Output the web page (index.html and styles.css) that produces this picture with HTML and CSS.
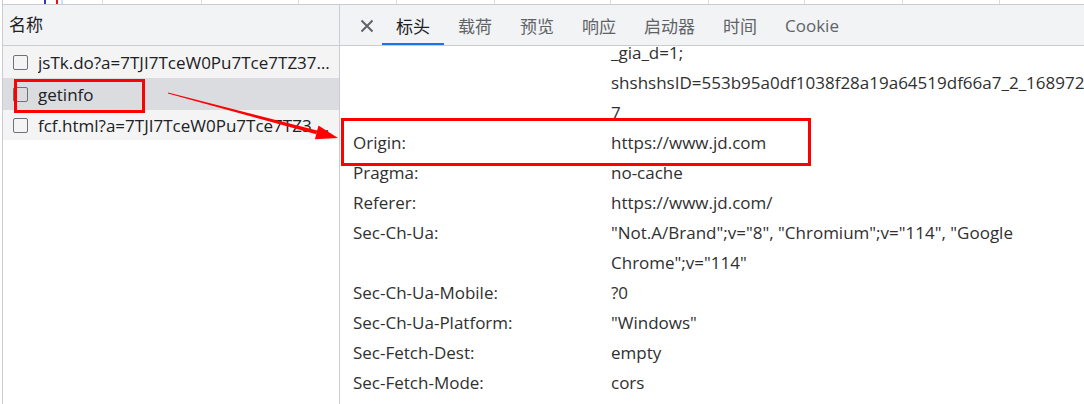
FILE: index.html
```html
<!DOCTYPE html>
<html lang="zh">
<head>
<meta charset="utf-8">
<link rel="stylesheet" href="styles.css">
</head>
<body>
<div class="page">
  <div class="timeline">
    <div class="tcell" style="width:100px"><span class="mark blue"></span><span class="mark red"></span><span class="mark lblue"></span></div>
    <div class="tcell" style="width:99px"></div>
    <div class="tcell" style="width:97px"></div>
    <div class="tcell" style="width:98px"></div>
    <div class="tcell" style="width:98px"></div>
    <div class="tcell" style="width:116px"></div>
    <div class="tcell" style="width:98px"></div>
    <div class="tcell" style="width:96px"></div>
    <div class="tcell" style="width:98px"></div>
    <div class="tcell" style="width:97px"></div>
    <div class="tcell last"></div>
  </div>
  <div class="main">
    <div class="left">
      <div class="lhead">名称</div>
      <div class="row"><span class="cb"></span><span class="rname">jsTk.do?a=7TJI7TceW0Pu7Tce7TZ37Tce7TceW0Pu7TceW0</span></div>
      <div class="row sel"><span class="cb"></span><span class="rname">getinfo</span></div>
      <div class="row short"><span class="cb"></span><span class="rname">fcf.html?a=7TJI7TceW0Pu7Tce7TZ3 7Tce7TceW0Pu7TceW0</span></div>
    </div>
    <div class="right">
      <div class="tabs">
        <span class="close"><svg width="14" height="14" viewBox="0 0 14 14"><path d="M1.5 1.5 L12.5 12.5 M12.5 1.5 L1.5 12.5" stroke="#5f6368" stroke-width="2" fill="none"/></svg></span>
        <span class="tab active">标头</span>
        <span class="tab">载荷</span>
        <span class="tab">预览</span>
        <span class="tab">响应</span>
        <span class="tab">启动器</span>
        <span class="tab">时间</span>
        <span class="tab">Cookie</span>
      </div>
      <div class="body">
        <div class="hlist">
          <div class="hrow"><span class="hn"></span><span class="hv">_gia_d=1;</span></div>
          <div class="hrow"><span class="hn"></span><span class="hv">shshshsID=553b95a0df1038f28a19a64519df66a7_2_168972<br>7</span></div>
          <div class="hrow"><span class="hn">Origin:</span><span class="hv">https://www.jd.com</span></div>
          <div class="hrow"><span class="hn">Pragma:</span><span class="hv">no-cache</span></div>
          <div class="hrow"><span class="hn">Referer:</span><span class="hv">https://www.jd.com/</span></div>
          <div class="hrow"><span class="hn">Sec-Ch-Ua:</span><span class="hv">"Not.A/Brand";v="8", "Chromium";v="114", "Google<br>Chrome";v="114"</span></div>
          <div class="hrow"><span class="hn">Sec-Ch-Ua-Mobile:</span><span class="hv">?0</span></div>
          <div class="hrow"><span class="hn">Sec-Ch-Ua-Platform:</span><span class="hv">"Windows"</span></div>
          <div class="hrow"><span class="hn">Sec-Fetch-Dest:</span><span class="hv">empty</span></div>
          <div class="hrow"><span class="hn">Sec-Fetch-Mode:</span><span class="hv">cors</span></div>
        </div>
      </div>
    </div>
  </div>
  <svg class="annot" width="1084" height="404" viewBox="0 0 1084 404">
    <rect x="15.5" y="80.5" width="128" height="31" fill="none" stroke="#ff0000" stroke-width="3"/>
    <rect x="342.5" y="119.5" width="467" height="45" fill="none" stroke="#ff0000" stroke-width="3"/>
    <polygon points="168,92.6 168,93.4 316.2,134.3 317.2,130.5" fill="#ff0000"/>
    <polygon points="338,138 318.5,125.6 314.9,139.2" fill="#ff0000"/>
  </svg>
</div>
</body>
</html>
```
FILE: styles.css
```css
* { box-sizing: border-box; }
html, body { margin: 0; padding: 0; background: #fff; }
body {
  width: 1084px;
  height: 404px;
  overflow: hidden;
  font-family: "Open Sans", "Noto Sans CJK SC", sans-serif;
  font-size: 17px;
  color: #202124;
}
.page { position: relative; width: 1084px; height: 404px; }
.timeline {
  display: flex;
  height: 5px;
  border-bottom: 1px solid #c9ccd0;
  margin-left: 2px;
  border-left: 1px solid #c9ccd0;
}
.tcell { height: 4px; border-right: 1px solid #dcdcdc; display: flex; align-items: stretch; }
.tcell.last { flex: 1; border-right: none; }
.mark { width: 2px; height: 4px; }
.mark.blue { background: #2b3cb0; margin-left: 41px; }
.mark.red { background: #e5121b; margin-left: 10px; }
.mark.lblue { background: #c6e3f7; margin-left: 3px; width: 2px; }

.main { display: flex; height: 399px; margin-left: 2px; }
.left {
  width: 338px;
  border-left: 1px solid #c9ccd0;
  border-right: 1px solid #c9ccd0;
  display: flex;
  flex-direction: column;
}
.lhead {
  height: 41px;
  background: #f1f3f4;
  border-bottom: 1px solid #c9ccd0;
  padding-left: 6px;
  line-height: 40px;
  font-size: 17px;
  color: #202124;
}
.row {
  height: 32px;
  background: #f4f4f4;
  display: flex;
  align-items: center;
  padding-left: 10px;
  padding-right: 6px;
}
.row.sel { background: #dadce0; }
.row.short { height: 30px; }
.cb {
  flex: none;
  width: 15px;
  height: 15px;
  border: 1.5px solid #6e7175;
  border-radius: 2px;
  margin-right: 10px;
  background: transparent;
}
.rname {
  flex: 1;
  min-width: 0;
  white-space: nowrap;
  overflow: hidden;
  text-overflow: ellipsis;
  color: #202124;
}

.right { flex: 1; display: flex; flex-direction: column; min-width: 0; }
.tabs {
  height: 41px;
  background: #f1f3f4;
  border-bottom: 1px solid #c9ccd0;
  display: flex;
  align-items: stretch;
}
.close {
  width: 42px;
  display: flex;
  align-items: center;
  justify-content: center;
  padding-left: 12px;
  padding-top: 1px;
}
.tab {
  padding: 0 14px;
  display: flex;
  align-items: center;
  color: #5f6368;
  border-bottom: 2px solid transparent;
  padding-top: 2px;
}
.tab.active { color: #202124; border-bottom-color: #1a73e8; }

.body { flex: 1; overflow: hidden; }
.hlist { margin-top: -8px; padding-left: 13px; }
.hrow { display: flex; line-height: 30px; color: #303030; }
.hn { width: 258px; flex: none; }
.hv { white-space: nowrap; }

.annot { position: absolute; left: 0; top: 0; pointer-events: none; }
```
